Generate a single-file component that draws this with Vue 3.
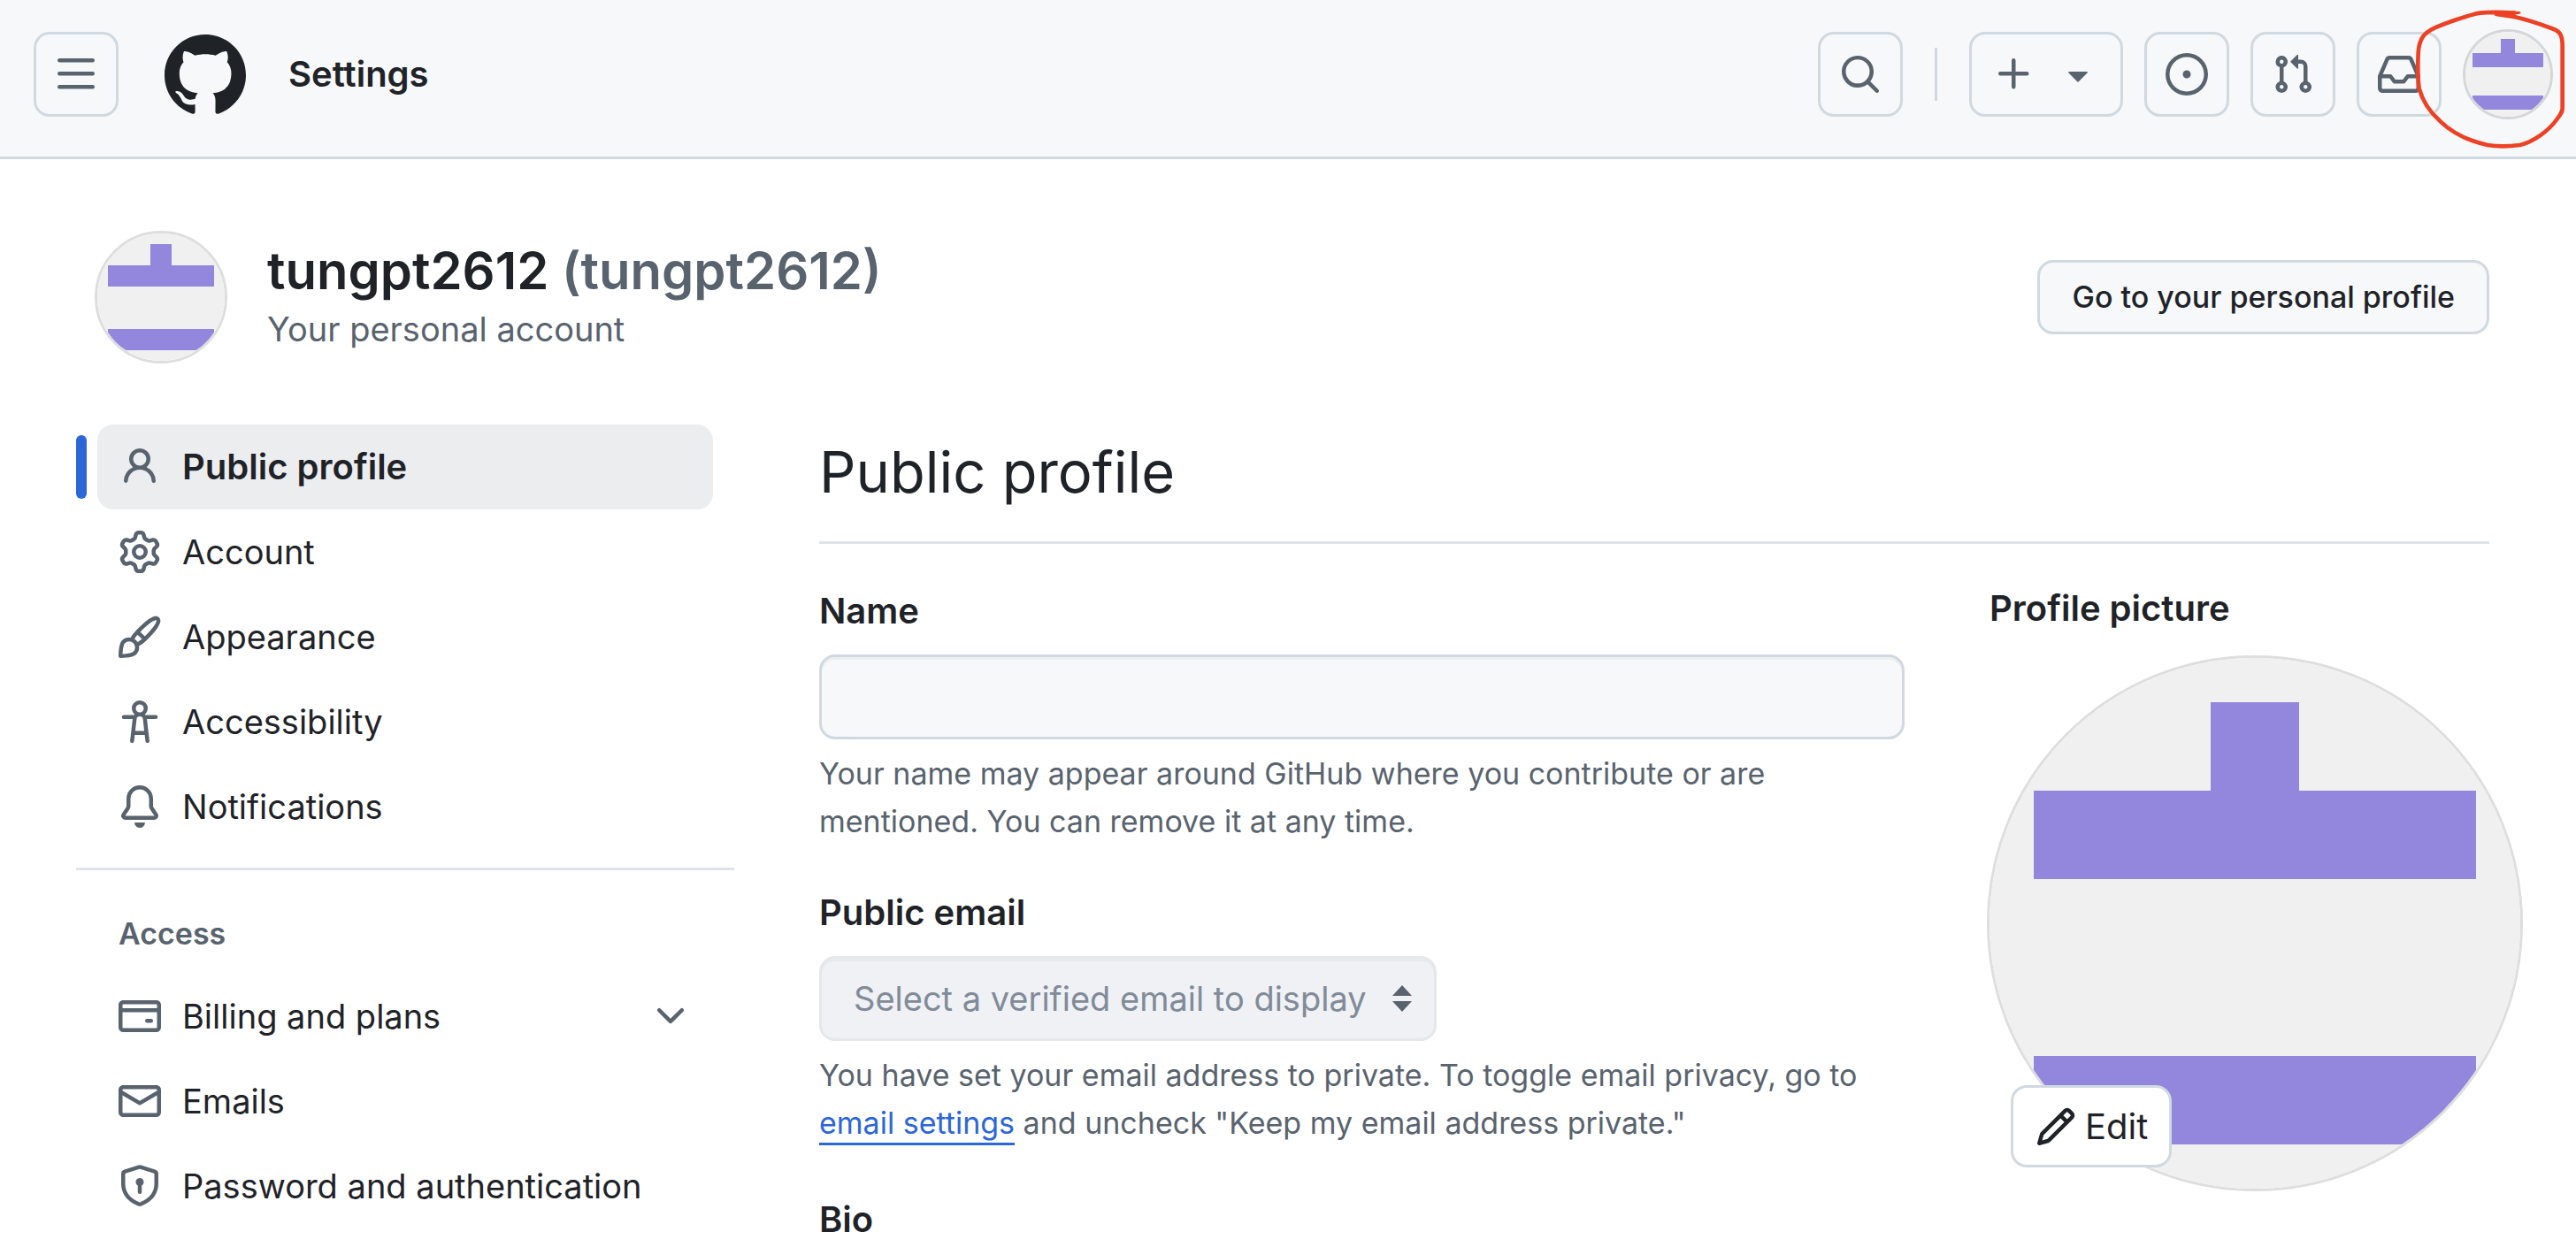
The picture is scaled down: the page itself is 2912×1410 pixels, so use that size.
<script setup>
import { h } from 'vue'

const paths = {
  menu: 'M1 2.75A.75.75 0 0 1 1.75 2h12.5a.75.75 0 0 1 0 1.5H1.75A.75.75 0 0 1 1 2.75Zm0 5A.75.75 0 0 1 1.75 7h12.5a.75.75 0 0 1 0 1.5H1.75A.75.75 0 0 1 1 7.75ZM1.75 12h12.5a.75.75 0 0 1 0 1.5H1.75a.75.75 0 0 1 0-1.5Z',
  search: 'M10.68 11.74a6 6 0 0 1-7.922-8.982 6 6 0 0 1 8.982 7.922l3.04 3.04a.749.749 0 0 1-.326 1.275.749.749 0 0 1-.734-.215ZM11.5 7a4.499 4.499 0 1 0-8.997 0A4.499 4.499 0 0 0 11.5 7Z',
  plus: 'M7.75 2a.75.75 0 0 1 .75.75V7h4.25a.75.75 0 0 1 0 1.5H8.5v4.25a.75.75 0 0 1-1.5 0V8.5H2.75a.75.75 0 0 1 0-1.5H7V2.75A.75.75 0 0 1 7.75 2Z',
  caret: 'm4.427 7.427 3.396 3.396a.25.25 0 0 0 .354 0l3.396-3.396A.25.25 0 0 0 11.396 7H4.604a.25.25 0 0 0-.177.427Z',
  issue: 'M8 9.5a1.5 1.5 0 1 0 0-3 1.5 1.5 0 0 0 0 3ZM8 0a8 8 0 1 1 0 16A8 8 0 0 1 8 0ZM1.5 8a6.5 6.5 0 1 0 13 0 6.5 6.5 0 0 0-13 0Z',
  pull: 'M1.5 3.25a2.25 2.25 0 1 1 3 2.122v5.256a2.251 2.251 0 1 1-1.5 0V5.372A2.25 2.25 0 0 1 1.5 3.25Zm5.677-.177L9.573.677A.25.25 0 0 1 10 .854V2.5h1A2.5 2.5 0 0 1 13.5 5v5.628a2.251 2.251 0 1 1-1.5 0V5a1 1 0 0 0-1-1h-1v1.646a.25.25 0 0 1-.427.177L7.177 3.427a.25.25 0 0 1 0-.354ZM3.75 2.5a.75.75 0 1 0 0 1.5.75.75 0 0 0 0-1.5Zm0 9.5a.75.75 0 1 0 0 1.5.75.75 0 0 0 0-1.5Zm8.25.75a.75.75 0 1 0 1.5 0 .75.75 0 0 0-1.5 0Z',
  inbox: 'M2.8 2.06A1.75 1.75 0 0 1 4.41 1h7.18c.7 0 1.333.417 1.61 1.06l2.74 6.395c.04.093.06.194.06.295v4.5A1.75 1.75 0 0 1 14.25 15H1.75A1.75 1.75 0 0 1 0 13.25v-4.5c0-.101.02-.202.06-.295Zm1.61.44a.25.25 0 0 0-.23.152L1.887 8H4.75a.75.75 0 0 1 .6.3L6.625 10h2.75l1.275-1.7a.75.75 0 0 1 .6-.3h2.863L11.82 2.652a.25.25 0 0 0-.23-.152Zm10.09 7h-2.875l-1.275 1.7a.75.75 0 0 1-.6.3h-3.5a.75.75 0 0 1-.6-.3L4.375 9.5H1.5v3.75c0 .138.112.25.25.25h12.5a.25.25 0 0 0 .25-.25Z',
  person: 'M10.561 8.073a6.005 6.005 0 0 1 3.432 5.142.75.75 0 1 1-1.498.07 4.5 4.5 0 0 0-8.99 0 .75.75 0 0 1-1.498-.07 6.004 6.004 0 0 1 3.431-5.142 3.999 3.999 0 1 1 5.123 0ZM10.5 5a2.5 2.5 0 1 0-5 0 2.5 2.5 0 0 0 5 0Z',
  gear: 'M8 0a8.2 8.2 0 0 1 .701.031C9.444.095 9.99.645 10.16 1.29l.288 1.107c.018.066.079.158.212.224.231.114.454.243.668.386.123.082.233.09.299.071l1.103-.303c.644-.176 1.392.021 1.82.63.27.385.506.792.704 1.218.315.675.111 1.422-.364 1.891l-.814.806c-.049.048-.098.147-.088.294.016.257.016.515 0 .772-.01.147.038.246.088.294l.814.806c.475.469.679 1.216.364 1.891a7.977 7.977 0 0 1-.704 1.217c-.428.61-1.176.807-1.82.63l-1.102-.302c-.067-.019-.177-.011-.3.071a5.909 5.909 0 0 1-.668.386c-.133.066-.194.158-.211.224l-.29 1.106c-.168.646-.715 1.196-1.458 1.26a8.006 8.006 0 0 1-1.402 0c-.743-.064-1.289-.614-1.458-1.26l-.289-1.106c-.018-.066-.079-.158-.212-.224a5.738 5.738 0 0 1-.668-.386c-.123-.082-.233-.09-.299-.071l-1.103.303c-.644.176-1.392-.021-1.82-.63a8.12 8.12 0 0 1-.704-1.218c-.315-.675-.111-1.422.363-1.891l.815-.806c.05-.048.098-.147.088-.294a6.214 6.214 0 0 1 0-.772c.01-.147-.038-.246-.088-.294l-.815-.806C.635 6.045.431 5.298.746 4.623a7.92 7.92 0 0 1 .704-1.217c.428-.61 1.176-.807 1.82-.63l1.102.302c.067.019.177.011.3-.071.214-.143.437-.272.668-.386.133-.066.194-.158.211-.224l.29-1.106C6.009.645 6.556.095 7.299.03 7.53.01 7.764 0 8 0Zm-.571 1.525c-.036.003-.108.036-.137.146l-.289 1.105c-.147.561-.549.967-.998 1.189-.173.086-.34.183-.5.29-.417.278-.97.423-1.529.27l-1.103-.303c-.109-.03-.175.016-.195.045-.22.312-.412.644-.573.99-.014.031-.021.11.059.19l.815.806c.411.406.562.957.53 1.456a4.709 4.709 0 0 0 0 .582c.032.499-.119 1.05-.53 1.456l-.815.806c-.081.08-.073.159-.059.19.162.346.353.677.573.989.02.03.085.076.195.046l1.102-.303c.56-.153 1.113-.008 1.53.27.161.107.328.204.501.29.447.222.85.629.997 1.189l.289 1.105c.029.109.101.143.137.146a6.6 6.6 0 0 0 1.142 0c.036-.003.108-.036.137-.146l.289-1.105c.147-.561.549-.967.998-1.189.173-.086.34-.183.5-.29.417-.278.97-.423 1.529-.27l1.103.303c.109.029.175-.016.195-.045.22-.313.411-.644.573-.99.014-.031.021-.11-.059-.19l-.815-.806c-.411-.406-.562-.957-.53-1.456a4.709 4.709 0 0 0 0-.582c-.032-.499.119-1.05.53-1.456l.815-.806c.081-.08.073-.159.059-.19a6.464 6.464 0 0 0-.573-.989c-.02-.03-.085-.076-.195-.046l-1.102.303c-.56.153-1.113.008-1.53-.27a4.44 4.44 0 0 0-.501-.29c-.447-.222-.85-.629-.997-1.189l-.289-1.105c-.029-.11-.101-.143-.137-.146a6.6 6.6 0 0 0-1.142 0ZM11 8a3 3 0 1 1-6 0 3 3 0 0 1 6 0ZM9.5 8a1.5 1.5 0 1 0-3.001.001A1.5 1.5 0 0 0 9.5 8Z',
  brush: 'M11.134 1.535c.7-.509 1.416-.942 2.076-1.155.649-.21 1.463-.267 2.069.34.603.601.568 1.411.368 2.07-.202.668-.624 1.39-1.125 2.096-1.011 1.424-2.496 2.987-3.775 4.249-1.098 1.084-2.132 1.839-3.04 2.3a3.744 3.744 0 0 1-1.055 3.217c-.431.431-1.065.691-1.657.861-.614.177-1.294.287-1.914.357A21.151 21.151 0 0 1 .797 16H.743l.007-.75H.749L.742 16a.75.75 0 0 1-.743-.742l.743-.008-.742.007v-.054a21.25 21.25 0 0 1 .13-2.284c.067-.647.187-1.287.358-1.914.17-.591.43-1.226.86-1.657a3.746 3.746 0 0 1 3.227-1.054c.466-.893 1.225-1.907 2.314-2.982 1.271-1.255 2.833-2.75 4.245-3.777ZM1.62 13.089c-.051.464-.086.929-.104 1.395.466-.018.932-.053 1.396-.104a10.511 10.511 0 0 0 1.668-.309c.526-.151.856-.325 1.011-.48a2.25 2.25 0 1 0-3.182-3.182c-.155.155-.329.485-.48 1.01a10.515 10.515 0 0 0-.309 1.67Zm10.396-10.34c-1.224.89-2.605 2.189-3.822 3.384l1.718 1.718c1.21-1.205 2.51-2.597 3.387-3.833.47-.662.78-1.227.912-1.662.134-.444.032-.551.009-.575h-.001V1.78c-.014-.014-.113-.113-.548.027-.432.14-.995.462-1.655.942Zm-4.832 7.266-.001.001a9.859 9.859 0 0 0 1.63-1.142L7.155 7.216a9.7 9.7 0 0 0-1.161 1.607c.482.302.889.71 1.19 1.192Z',
  accessibility: 'M9.923 5.302c.063.063.122.129.178.198H14A.75.75 0 0 1 14 7h-3.3l.578 5.163.362 2.997a.75.75 0 0 1-1.49.18L9.868 13H6.132l-.282 2.34a.75.75 0 0 1-1.49-.18l.362-2.997L5.3 7H2a.75.75 0 0 1 0-1.5h3.9a2.54 2.54 0 0 1 .176-.198 3 3 0 1 1 3.847 0ZM9.2 7.073h-.001a1.206 1.206 0 0 0-2.398 0L6.305 11.5h3.39ZM9.5 3a1.5 1.5 0 1 0-3.001.001A1.5 1.5 0 0 0 9.5 3Z',
  bell: 'M8 16a2 2 0 0 0 1.985-1.75c.017-.137-.097-.25-.235-.25h-3.5c-.138 0-.252.113-.235.25A2 2 0 0 0 8 16ZM3 5a5 5 0 0 1 10 0v2.947c0 .05.015.098.042.139l1.703 2.555A1.519 1.519 0 0 1 13.482 13H2.518a1.516 1.516 0 0 1-1.263-2.36l1.703-2.554A.255.255 0 0 0 3 7.947Zm5-3.5A3.5 3.5 0 0 0 4.5 5v2.947c0 .346-.102.683-.294.97l-1.703 2.556a.017.017 0 0 0-.003.01l.001.006c0 .002.002.004.004.006l.006.004.007.001h10.964l.007-.001.006-.004.004-.006.001-.007a.017.017 0 0 0-.003-.01l-1.703-2.554a1.745 1.745 0 0 1-.294-.97V5A3.5 3.5 0 0 0 8 1.5Z',
  card: 'M10.75 9a.75.75 0 0 0 0 1.5h1.5a.75.75 0 0 0 0-1.5h-1.5ZM0 3.75C0 2.784.784 2 1.75 2h12.5c.966 0 1.75.784 1.75 1.75v8.5A1.75 1.75 0 0 1 14.25 14H1.75A1.75 1.75 0 0 1 0 12.25ZM14.5 6.5h-13v5.75c0 .138.112.25.25.25h12.5a.25.25 0 0 0 .25-.25Zm0-2.75a.25.25 0 0 0-.25-.25H1.75a.25.25 0 0 0-.25.25V5h13Z',
  mail: 'M1.75 2h12.5c.966 0 1.75.784 1.75 1.75v8.5A1.75 1.75 0 0 1 14.25 14H1.75A1.75 1.75 0 0 1 0 12.25v-8.5C0 2.784.784 2 1.75 2ZM1.5 12.251c0 .138.112.25.25.25h12.5a.25.25 0 0 0 .25-.25V5.809L8.38 9.397a.75.75 0 0 1-.76 0L1.5 5.809v6.442Zm13-8.181v-.32a.25.25 0 0 0-.25-.25H1.75a.25.25 0 0 0-.25.25v.32L8 7.88Z',
  shield: 'm8.533.133 5.25 1.68A1.75 1.75 0 0 1 15 3.48V7c0 1.566-.32 3.182-1.303 4.682-.983 1.498-2.585 2.813-5.032 3.855a1.697 1.697 0 0 1-1.33 0c-2.447-1.042-4.049-2.357-5.032-3.855C1.32 10.182 1 8.566 1 7V3.48a1.75 1.75 0 0 1 1.217-1.667l5.25-1.68a1.748 1.748 0 0 1 1.066 0Zm-.61 1.429.001.001-5.25 1.68a.251.251 0 0 0-.174.237V7c0 1.36.275 2.666 1.057 3.859.784 1.194 2.121 2.342 4.366 3.298a.196.196 0 0 0 .154 0c2.245-.957 3.582-2.103 4.366-3.297C13.225 9.666 13.5 8.358 13.5 7V3.48a.25.25 0 0 0-.174-.238l-5.25-1.68a.25.25 0 0 0-.153 0ZM9.5 6.5c0 .536-.286 1.032-.75 1.3v2.45a.75.75 0 0 1-1.5 0V7.8A1.5 1.5 0 1 1 9.5 6.5Z',
  chevron: 'M12.78 5.22a.749.749 0 0 1 0 1.06l-4.25 4.25a.749.749 0 0 1-1.06 0L3.22 6.28a.749.749 0 1 1 1.06-1.06L8 8.939l3.72-3.719a.749.749 0 0 1 1.06 0Z',
  pencil: 'M11.013 1.427a1.75 1.75 0 0 1 2.474 0l1.086 1.086a1.75 1.75 0 0 1 0 2.474l-8.61 8.61c-.21.21-.47.364-.756.445l-3.251.93a.75.75 0 0 1-.927-.928l.929-3.25c.081-.286.235-.547.445-.758l8.61-8.61Zm.176 4.823L9.75 4.81l-6.286 6.287a.253.253 0 0 0-.064.108l-.558 1.953 1.953-.558a.253.253 0 0 0 .108-.064Zm1.238-3.763a.25.25 0 0 0-.354 0L10.811 3.75l1.439 1.44 1.263-1.263a.25.25 0 0 0 0-.354Z'
}

const Icon = (props) =>
  h('svg', { viewBox: '0 0 16 16', fill: 'currentColor', 'aria-hidden': 'true' }, [
    h('path', { d: paths[props.name] })
  ])
Icon.props = ['name']

// Identicon on a 12-unit grid: 1 unit of margin, 5 cells of 2 units.
const Identicon = () =>
  h('svg', { viewBox: '0 0 12 12', role: 'img', 'aria-label': '@tungpt2612' }, [
    h('rect', { width: 12, height: 12, fill: '#f0f0f0' }),
    h('path', { d: 'M5 1h2v2h4v2H1V3h4ZM1 9h10v2H1Z', fill: '#9287dd' })
  ])

const personal = [
  { label: 'Public profile', icon: 'person', current: true },
  { label: 'Account', icon: 'gear' },
  { label: 'Appearance', icon: 'brush' },
  { label: 'Accessibility', icon: 'accessibility' },
  { label: 'Notifications', icon: 'bell' }
]
const access = [
  { label: 'Billing and plans', icon: 'card', expandable: true },
  { label: 'Emails', icon: 'mail' },
  { label: 'Password and authentication', icon: 'shield' }
]
</script>

<template>
  <div class="app">
    <header class="topbar">
      <button class="tool" type="button" aria-label="Open menu"><Icon name="menu" class="icon" /></button>
      <a class="logo" href="#" aria-label="Homepage">
        <svg viewBox="0 0 24 24" fill="currentColor" aria-hidden="true">
          <path d="M12.5.75C6.146.75 1 5.896 1 12.25c0 5.089 3.292 9.387 7.863 10.91.575.101.79-.244.79-.546 0-.273-.014-1.178-.014-2.142-2.889.532-3.636-.704-3.866-1.35-.13-.331-.69-1.352-1.18-1.625-.402-.216-.977-.748-.014-.762.906-.014 1.553.834 1.769 1.179 1.035 1.74 2.688 1.25 3.349.948.1-.747.402-1.25.733-1.538-2.559-.287-5.232-1.279-5.232-5.678 0-1.25.445-2.285 1.178-3.09-.115-.288-.517-1.467.115-3.048 0 0 .963-.302 3.163 1.179.92-.259 1.897-.388 2.875-.388.977 0 1.955.13 2.875.388 2.2-1.495 3.162-1.179 3.162-1.179.633 1.581.23 2.76.115 3.048.733.805 1.179 1.825 1.179 3.09 0 4.413-2.688 5.39-5.247 5.678.417.36.776 1.05.776 2.128 0 1.538-.014 2.774-.014 3.162 0 .302.216.662.79.547C20.709 21.637 24 17.324 24 12.25 24 5.896 18.854.75 12.5.75Z" />
        </svg>
      </a>
      <a class="context" href="#">Settings</a>
      <div class="tools">
        <button class="tool" type="button" aria-label="Search"><Icon name="search" class="icon" /></button>
        <span class="divider"></span>
        <button class="tool create" type="button" aria-label="Create new">
          <Icon name="plus" class="icon" /><Icon name="caret" class="icon" />
        </button>
        <a class="tool" href="#" aria-label="Issues"><Icon name="issue" class="icon" /></a>
        <a class="tool" href="#" aria-label="Pull requests"><Icon name="pull" class="icon" /></a>
        <a class="tool" href="#" aria-label="Inbox"><Icon name="inbox" class="icon" /></a>
        <button class="user" type="button" aria-label="Open user menu">
          <span class="avatar avatar-small"><Identicon /></span>
        </button>
      </div>
      <svg class="scribble" viewBox="0 0 600 540" aria-hidden="true">
        <path d="M390 44C360 42 300 41 275 44C235 50 150 82 120 95C85 112 68 130 65 180C63 225 64 270 68 300C80 345 110 385 140 412C185 455 235 478 300 492C330 497 370 497 410 492C460 480 510 440 535 405C549 385 555 378 554 365L554 150C553 120 545 106 525 99C480 82 430 65 390 57L330 48" />
        <path class="tip" d="M380 37L408 39Q418 43 408 47L380 52Z" />
      </svg>
    </header>

    <div class="page">
      <section class="account">
        <span class="avatar avatar-medium"><Identicon /></span>
        <div class="who">
          <h1>tungpt2612 <span>(tungpt2612)</span></h1>
          <p>Your personal account</p>
        </div>
        <a class="profile-button" href="#">Go to your personal profile</a>
      </section>

      <div class="columns">
        <nav class="sidebar" aria-label="User settings">
          <ul>
            <li v-for="item in personal" :key="item.label" :class="{ current: item.current }">
              <a href="#" :aria-current="item.current ? 'page' : null">
                <Icon :name="item.icon" class="icon" /><span>{{ item.label }}</span>
              </a>
            </li>
          </ul>
          <h2>Access</h2>
          <ul>
            <li v-for="item in access" :key="item.label">
              <button v-if="item.expandable" type="button" aria-expanded="false">
                <Icon :name="item.icon" class="icon" /><span>{{ item.label }}</span>
                <Icon name="chevron" class="icon" />
              </button>
              <a v-else href="#"><Icon :name="item.icon" class="icon" /><span>{{ item.label }}</span></a>
            </li>
          </ul>
        </nav>

        <main>
          <h2 class="title">Public profile</h2>
          <div class="body">
            <form>
              <div class="field">
                <label for="name">Name</label>
                <input id="name" type="text" />
                <p>Your name may appear around GitHub where you contribute or are mentioned. You can remove it at any time.</p>
              </div>
              <div class="field">
                <label for="email">Public email</label>
                <div class="select">
                  <select id="email" disabled>
                    <option>Select a verified email to display</option>
                  </select>
                  <svg viewBox="0 0 22 30" aria-hidden="true"><path d="M11 0L22 12H0ZM0 18H22L11 30Z" /></svg>
                </div>
                <p>
                  You have set your email address to private. To toggle email privacy, go to
                  <a href="#">email settings</a> and uncheck "Keep my email address private."
                </p>
              </div>
              <div class="field bio"><span class="label">Bio</span></div>
            </form>
            <section class="picture">
              <h3>Profile picture</h3>
              <div class="portrait">
                <span class="avatar avatar-large"><Identicon /></span>
                <button class="edit" type="button"><Icon name="pencil" class="icon" />Edit</button>
              </div>
            </section>
          </div>
        </main>
      </div>
    </div>
  </div>
</template>

<style>
body {
  margin: 0;
  background: #fff;
}
</style>

<style scoped>
.app {
  color: #1f2328;
  font: 38px/60px Inter, "Liberation Sans", sans-serif;
}
.app * {
  box-sizing: border-box;
}
h1, h2, h3, p, ul {
  margin: 0;
  padding: 0;
}
ul {
  list-style: none;
}
a {
  color: inherit;
  text-decoration: none;
}
button, input, select {
  margin: 0;
  font: inherit;
  color: inherit;
}
.icon {
  flex: none;
  width: 48px;
  height: 48px;
}

.topbar {
  position: relative;
  display: flex;
  align-items: center;
  gap: 48px;
  padding: 33px 26px 42px 38px;
  background: #f6f8fa;
  border-bottom: 3px solid #d1d9e0;
}
.tool {
  display: flex;
  flex: none;
  align-items: center;
  justify-content: center;
  gap: 24px;
  width: 96px;
  height: 96px;
  padding: 0;
  border: 3px solid #d1d9e0;
  border-radius: 18px;
  background: transparent;
  color: #59636e;
}
.create {
  width: auto;
  padding: 0 24px;
}
.logo svg {
  display: block;
  width: 96px;
  height: 96px;
}
.context {
  font-size: 40px;
  font-weight: 600;
}
.tools {
  display: flex;
  align-items: center;
  gap: 24px;
  margin-left: auto;
}
.divider {
  width: 3px;
  height: 60px;
  margin: 0 12px;
  background: #d1d9e0;
}
.user {
  padding: 0;
  border: 0;
  background: none;
}
.avatar {
  display: block;
  flex: none;
  overflow: hidden;
  border: 3px solid #dedede;
  border-radius: 50%;
}
.avatar svg {
  display: block;
}
.avatar-small {
  width: 102px;
  border-color: #d4d6d8;
}
.avatar-medium {
  width: 150px;
}
.avatar-large {
  width: 606px;
}
.scribble {
  position: absolute;
  top: 0;
  right: 0;
  width: 200px;
  height: 180px;
  fill: none;
  stroke: #ed4126;
  stroke-width: 14;
  stroke-linecap: round;
  stroke-linejoin: round;
  pointer-events: none;
}
.tip {
  fill: #ed4126;
  stroke: none;
}

.page {
  padding: 81px 98px 0 86px;
}
.account {
  display: flex;
  align-items: center;
  gap: 45px;
  padding-left: 21px;
}
.who {
  flex: 1;
}
h1 {
  font-size: 58px;
  line-height: 72px;
  font-weight: 600;
}
h1 span, .who p {
  color: #59636e;
}
.profile-button {
  padding: 12px 36px;
  border: 3px solid #d1d9e0;
  border-radius: 18px;
  background: #f6f8fa;
  font-size: 34px;
  line-height: 54px;
  font-weight: 500;
}

.columns {
  display: flex;
  gap: 96px;
  margin-top: 69px;
}
.sidebar {
  flex: none;
  width: 744px;
}
.sidebar li {
  position: relative;
  padding: 0 24px;
}
.sidebar a, .sidebar button {
  display: flex;
  align-items: center;
  gap: 24px;
  width: 100%;
  height: 96px;
  padding: 0 24px;
  border: 0;
  border-radius: 18px;
  background: none;
  text-align: left;
}
.sidebar li span {
  flex: 1;
}
.sidebar .icon {
  color: #59636e;
}
.sidebar .current a {
  background: #ecedef;
  font-size: 40px;
  font-weight: 600;
}
.current::before {
  content: "";
  position: absolute;
  top: 12px;
  left: 0;
  width: 12px;
  height: 72px;
  border-radius: 6px;
  background: #2d66d6;
}
.sidebar h2 {
  margin-top: 21px;
  padding: 45px 48px 18px;
  border-top: 3px solid #dfe3e8;
  color: #59636e;
  font-size: 34px;
  line-height: 54px;
  font-weight: 600;
}

main {
  flex: 1;
  min-width: 0;
}
.title {
  padding-bottom: 24px;
  border-bottom: 3px solid #dfe3e8;
  font-size: 65px;
  line-height: 108px;
  font-weight: 400;
}
.body {
  display: grid;
  grid-template-columns: 1fr 565px;
  gap: 96px;
  padding-top: 43px;
}
form {
  padding-top: 3px;
}
.field + .field {
  margin-top: 46px;
}
.field + .bio {
  margin-top: 52px;
}
label, .label, h3 {
  display: block;
  font-size: 40px;
  font-weight: 600;
}
input, select {
  display: block;
  width: 100%;
  height: 96px;
  padding: 0 36px;
  border: 3px solid #d1d9e0;
  border-radius: 18px;
  background: #f6f8fa;
  box-shadow: inset 0 3px 0 #eceff2;
}
input, .select {
  margin-top: 19px;
}
.select {
  position: relative;
  width: 698px;
}
select {
  appearance: none;
  border-color: #e5e7eb;
  background: #eff1f5;
  box-shadow: inset 0 3px 0 #e8eaee;
  color: #818b98;
  opacity: 1;
}
.select svg {
  position: absolute;
  top: 33px;
  right: 28px;
  width: 22px;
  height: 30px;
  fill: #59636e;
  pointer-events: none;
}
.field p {
  margin-top: 12px;
  color: #59636e;
  font-size: 34px;
  line-height: 54px;
}
.field p a {
  padding-bottom: 2px;
  border-bottom: 3px solid #2d66d6;
  color: #2d66d6;
}
.portrait {
  position: relative;
  margin: 23px 0 0 -3px;
}
.edit {
  position: absolute;
  left: 27px;
  bottom: 27px;
  display: flex;
  align-items: center;
  gap: 9px;
  height: 93px;
  padding: 0 24px;
  border: 3px solid #d1d9e0;
  border-radius: 18px;
  background: #fff;
  font-size: 40px;
}
</style>
